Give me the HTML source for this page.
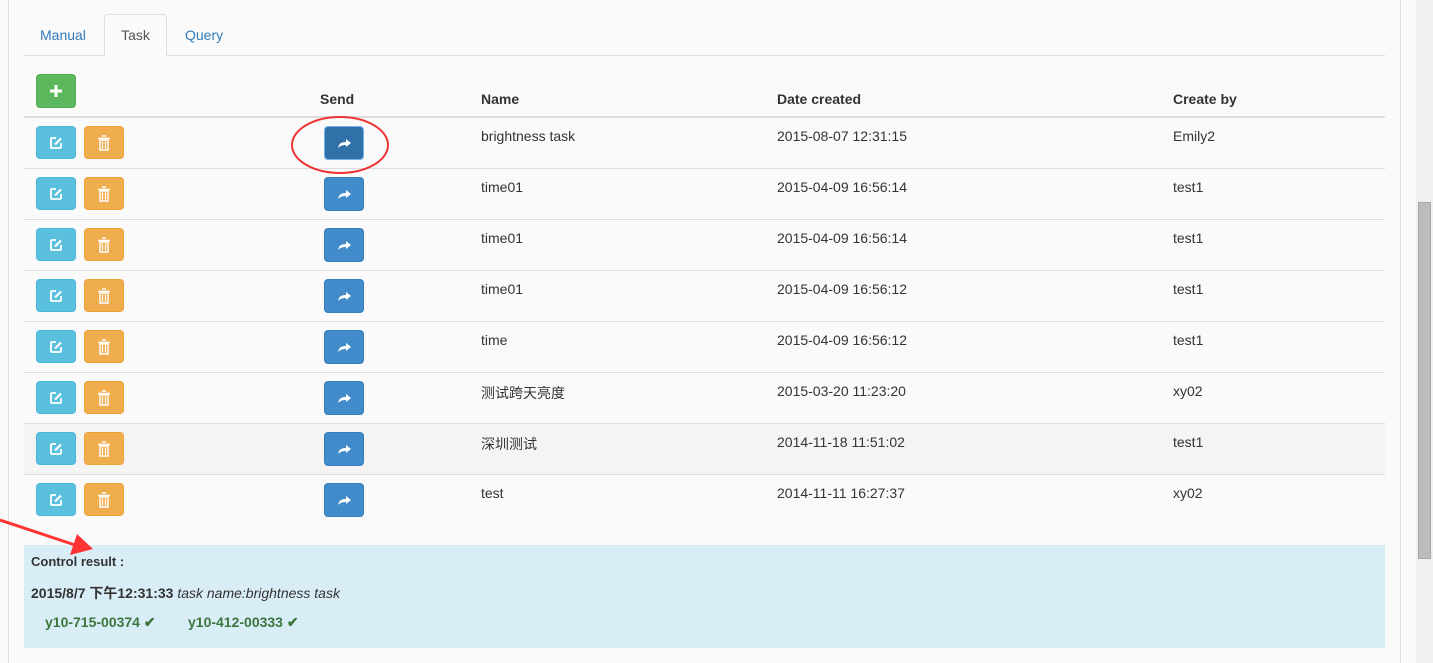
<!DOCTYPE html>
<html><head><meta charset="utf-8"><style>
*{box-sizing:border-box}
body{margin:0;width:1433px;height:663px;background:#fafafa;font-family:"Liberation Sans","Noto Sans CJK SC",sans-serif;font-size:14px;color:#333;position:relative;overflow:hidden}
.lb{position:absolute;left:8px;top:0;width:1px;height:663px;background:#ddd}
.rb{position:absolute;left:1400px;top:0;width:1px;height:663px;background:#ddd}
.sb{position:absolute;left:1416px;top:0;width:17px;height:663px;background:#f0f0f0}
.th{position:absolute;left:1418px;top:202px;width:13px;height:357px;background:#bcbcbc;border:1px solid #a8a8a8}
.tabs{position:absolute;left:24px;top:55px;width:1361px;height:1px;background:#ddd}
.tab{position:absolute;top:27px;font-size:14px;color:#337ab7}
.tabact{position:absolute;left:104px;top:14px;width:63px;height:42px;border:1px solid #ddd;border-bottom:none;background:#fafafa;border-radius:4px 4px 0 0;text-align:center;line-height:40px;color:#555}
.btn{position:absolute;border-radius:4px;display:flex;align-items:center;justify-content:center}
.g{background:#5cb85c;border:1px solid #4cae4c}
.i{background:#5bc0de;border:1px solid #46b8da}
.w{background:#f0ad4e;border:1px solid #eea236}
.p{background:#428bca;border:1px solid #357ebd}
.hd{position:absolute;top:91px;font-weight:bold}
.line{position:absolute;left:24px;width:1361px;height:1px;background:#ddd}
.cell{position:absolute}
.alert{position:absolute;left:24px;top:545px;width:1361px;height:103px;background:#d9edf7}
</style></head><body>
<div class="lb"></div><div class="rb"></div><div class="sb"></div><div class="th"></div>
<div class="tabs"></div>
<div class="tab" style="left:40px">Manual</div>
<div class="tabact">Task</div>
<div class="tab" style="left:185px">Query</div>
<div class="btn g" style="left:36px;top:74px;width:40px;height:34px"><svg width="12" height="12"><path d="M4.5 0h3v4.5H12v3H7.5V12h-3V7.5H0v-3h4.5z" fill="#fff"/></svg></div>
<div class="hd" style="left:320px">Send</div>
<div class="hd" style="left:481px">Name</div>
<div class="hd" style="left:777px">Date created</div>
<div class="hd" style="left:1173px">Create by</div>
<div class="line" style="top:116px;height:2px"></div>
<div style="position:absolute;left:24px;top:423px;width:1361px;height:51px;background:#f4f4f4"></div>
<div id="rows"></div>
<script>
var d=[["brightness task","2015-08-07 12:31:15","Emily2"],["time01","2015-04-09 16:56:14","test1"],["time01","2015-04-09 16:56:14","test1"],["time01","2015-04-09 16:56:12","test1"],["time","2015-04-09 16:56:12","test1"],["测试跨天亮度","2015-03-20 11:23:20","xy02"],["深圳测试","2014-11-18 11:51:02","test1"],["test","2014-11-11 16:27:37","xy02"]];
var h="";
for(var k=0;k<8;k++){var y=118+k*51;
if(k<7)h+='<div class="line" style="top:'+(y+50)+'px"></div>';
h+='<div class="btn i" style="left:36px;top:'+(y+8)+'px;width:40px;height:33px"><svg width="14" height="14"><path d="M7 2H3a1 1 0 0 0-1 1v8a1 1 0 0 0 1 1h8a1 1 0 0 0 1-1V7" stroke="#fff" stroke-width="1.8" fill="none"/><path d="M6 8.5l6-6" stroke="#fff" stroke-width="2.2"/></svg></div>';
h+='<div class="btn w" style="left:84px;top:'+(y+8)+'px;width:40px;height:33px"><svg width="12" height="16"><path d="M4 1h4M0 3.5h12" stroke="#fff" stroke-width="1.5"/><path d="M2 5h8v10H2z" fill="none" stroke="#fff" stroke-width="1.4"/><path d="M4.5 6.5v7M7.5 6.5v7" stroke="#fff" stroke-width="1.2"/></svg></div>';
h+='<div class="btn p" style="left:324px;top:'+(y+8)+'px;width:40px;height:34px;'+(k==0?'background:#3071a9;border-color:#7ab0ea':'')+'"><svg width="13" height="11"><path d="M0 10C1 5 4 4 8 4V1l5 4-5 4V7C4 7 2 8 0 10z" fill="#fff"/></svg></div>';
h+='<div class="cell" style="left:481px;top:'+(y+10)+'px">'+d[k][0]+'</div><div class="cell" style="left:777px;top:'+(y+10)+'px">'+d[k][1]+'</div><div class="cell" style="left:1173px;top:'+(y+10)+'px">'+d[k][2]+'</div>';}
document.getElementById("rows").innerHTML=h;
</script>
<div class="alert">
<div style="position:absolute;left:7px;top:9px;font-weight:bold;font-size:13px">Control result :</div>
<div style="position:absolute;left:7px;top:38px;font-size:14px"><b>2015/8/7 下午12:31:33</b> <i>task name:brightness task</i></div>
<div style="position:absolute;left:21px;top:69px;font-weight:bold;color:#3c763d">y10-715-00374 ✔</div>
<div style="position:absolute;left:164px;top:69px;font-weight:bold;color:#3c763d">y10-412-00333 ✔</div>
</div>
<svg style="position:absolute;left:0;top:0" width="1433" height="663">
<ellipse cx="340" cy="145" rx="48" ry="28" fill="none" stroke="#e33" stroke-width="2"/>
<path d="M0 520L75 545" stroke="#f33" stroke-width="3"/>
<path d="M93 549L70 555L77 534z" fill="#f33"/>
</svg>
</body></html>
